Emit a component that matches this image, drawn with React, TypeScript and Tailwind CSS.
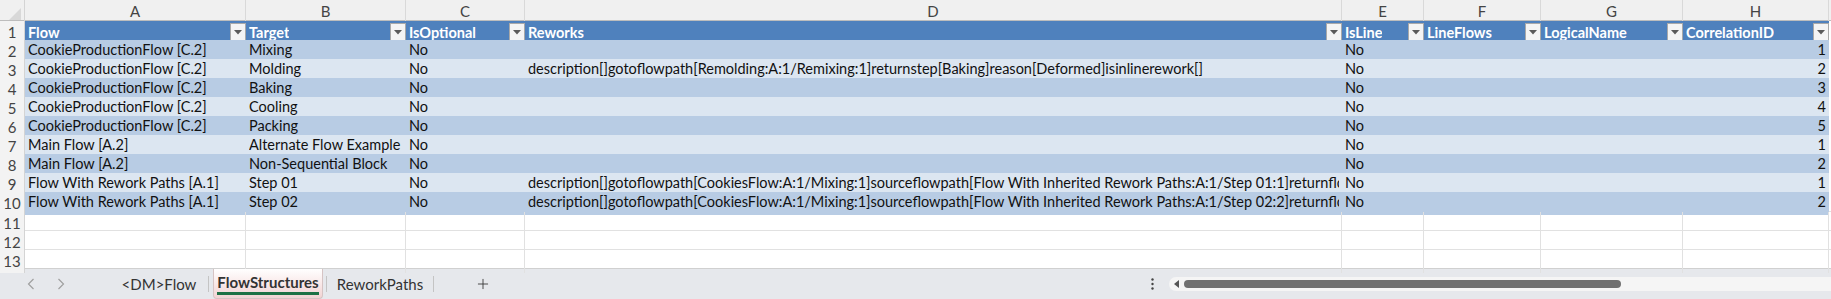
import { Plus } from "lucide-react";

const COLS = "grid grid-cols-[25px_221px_160px_119px_817px_82px_117px_142px_146px_2px]";
const FONT = "font-['Lato',_'Liberation_Sans',_sans-serif]";

type Row = {
  flow: string;
  target: string;
  optional: string;
  reworks: string;
  isLine: string;
  id: number;
};

const rows: Row[] = [
  { flow: "CookieProductionFlow [C.2]", target: "Mixing", optional: "No", reworks: "", isLine: "No", id: 1 },
  {
    flow: "CookieProductionFlow [C.2]",
    target: "Molding",
    optional: "No",
    reworks:
      "description[]gotoflowpath[Remolding:A:1/Remixing:1]returnstep[Baking]reason[Deformed]isinlinerework[]",
    isLine: "No",
    id: 2,
  },
  { flow: "CookieProductionFlow [C.2]", target: "Baking", optional: "No", reworks: "", isLine: "No", id: 3 },
  { flow: "CookieProductionFlow [C.2]", target: "Cooling", optional: "No", reworks: "", isLine: "No", id: 4 },
  { flow: "CookieProductionFlow [C.2]", target: "Packing", optional: "No", reworks: "", isLine: "No", id: 5 },
  { flow: "Main Flow [A.2]", target: "Alternate Flow Example", optional: "No", reworks: "", isLine: "No", id: 1 },
  { flow: "Main Flow [A.2]", target: "Non-Sequential Block", optional: "No", reworks: "", isLine: "No", id: 2 },
  {
    flow: "Flow With Rework Paths [A.1]",
    target: "Step 01",
    optional: "No",
    reworks:
      "description[]gotoflowpath[CookiesFlow:A:1/Mixing:1]sourceflowpath[Flow With Inherited Rework Paths:A:1/Step 01:1]returnflowpath[]",
    isLine: "No",
    id: 1,
  },
  {
    flow: "Flow With Rework Paths [A.1]",
    target: "Step 02",
    optional: "No",
    reworks:
      "description[]gotoflowpath[CookiesFlow:A:1/Mixing:1]sourceflowpath[Flow With Inherited Rework Paths:A:1/Step 02:2]returnflowpath[]",
    isLine: "No",
    id: 2,
  },
];

const headers = ["Flow", "Target", "IsOptional", "Reworks", "IsLine", "LineFlows", "LogicalName", "CorrelationID"];
const letters = ["A", "B", "C", "D", "E", "F", "G", "H"];

function FilterButton() {
  return (
    <span className="flex h-[18px] w-[16px] shrink-0 items-center justify-center border border-[#a9a9a9] bg-[#f4f4f4]">
      <svg width="8" height="5" viewBox="0 0 8 5">
        <path d="M0 0h8L4 4.5z" fill="#5a5a5a" />
      </svg>
    </span>
  );
}

function RowNum({ n }: { n: number }) {
  return (
    <div className="flex items-center justify-center border-r border-[#d4d4d4] bg-[#f3f3f3] text-[15px] text-[#444]">
      {n}
    </div>
  );
}

function Cell({ children, right }: { children?: React.ReactNode; right?: boolean }) {
  return (
    <div className="min-w-0 px-[3px]">
      <div className={`overflow-hidden whitespace-nowrap leading-[19px] ${right ? "text-right" : ""}`}>
        {children}
      </div>
    </div>
  );
}

export default function App() {
  return (
    <div className={`h-[299px] w-[1831px] overflow-hidden bg-white text-[14.5px] text-[#111] ${FONT}`}>
      {/* Column letters */}
      <div className={`${COLS} h-[21px] border-b border-[#bdbdbd] bg-[#f0f0f0] text-[15px] text-[#444]`}>
        <div className="relative border-r border-[#d4d4d4]">
          <svg className="absolute bottom-[3px] right-[3px]" width="12" height="12" viewBox="0 0 12 12">
            <path d="M12 0v12H0z" fill="#d8d8d8" />
          </svg>
        </div>
        {letters.map((l) => (
          <div key={l} className="flex items-center justify-center border-r border-[#d9d9d9]">
            {l}
          </div>
        ))}
        <div />
      </div>

      {/* Table header row */}
      <div className={`${COLS} h-[19px]`}>
        <RowNum n={1} />
        {headers.map((h) => (
          <div key={h} className="flex min-w-0 items-center justify-between bg-[#4f81bd] pl-[3px] font-bold text-white">
            <span className="overflow-hidden whitespace-nowrap leading-[19px]">{h}</span>
            <FilterButton />
          </div>
        ))}
        <div />
      </div>

      {/* Data rows */}
      {rows.map((r, i) => (
        <div key={i} className={`${COLS} h-[19px]`}>
          <RowNum n={i + 2} />
          <div className={`col-span-8 grid grid-cols-subgrid ${i % 2 === 0 ? "bg-[#b8cce4]" : "bg-[#dce6f1]"}`}>
            <Cell>{r.flow}</Cell>
            <Cell>{r.target}</Cell>
            <Cell>{r.optional}</Cell>
            <Cell>{r.reworks}</Cell>
            <Cell>{r.isLine}</Cell>
            <Cell />
            <Cell />
            <Cell right>{r.id}</Cell>
          </div>
          <div />
        </div>
      ))}

      {/* Empty rows */}
      {[11, 12, 13].map((n) => (
        <div key={n} className={`${COLS} h-[19px] border-t border-[#e1e1e1]`}>
          <RowNum n={n} />
          {letters.map((l) => (
            <div key={l} className="border-r border-[#e1e1e1]" />
          ))}
          <div />
        </div>
      ))}

      {/* Sheet tabs */}
      <div className="flex h-[31px] items-stretch border-t border-[#d0d0d0] bg-[#e6e8ec] text-[15px] text-[#333]">
        <div className="flex w-[110px] items-center gap-[22px] pl-[27px] text-[#a0a0a0]">
          <svg width="8" height="12" viewBox="0 0 8 12">
            <path d="M6.5 1L1.5 6l5 5" fill="none" stroke="currentColor" strokeWidth="1.2" />
          </svg>
          <svg width="8" height="12" viewBox="0 0 8 12">
            <path d="M1.5 1l5 5-5 5" fill="none" stroke="currentColor" strokeWidth="1.2" />
          </svg>
        </div>
        <div className="flex w-[98px] items-center justify-center">&lt;DM&gt;Flow</div>
        <div className="my-[7px] w-px bg-[#c4c4c4]" />
        <div className="ml-[4px] flex w-[110px] items-center justify-center rounded-b-[4px] border border-t-0 border-[#d6c4c4] bg-gradient-to-b from-white to-[#f2d3d3] font-bold">
          <span className="border-b-[3px] border-[#1e7145] leading-[20px]">FlowStructures</span>
        </div>
        <div className="ml-[3px] my-[7px] w-px bg-[#c4c4c4]" />
        <div className="flex w-[106px] items-center justify-center">ReworkPaths</div>
        <div className="my-[7px] w-px bg-[#c4c4c4]" />
        <div className="flex w-[98px] items-center justify-center text-[#333]">
          <Plus size={16} strokeWidth={1.3} />
        </div>
        <div className="flex-1" />
        <div className="flex w-[34px] items-center justify-center text-[#444]">
          <svg width="3" height="12" viewBox="0 0 3 12">
            <circle cx="1.5" cy="1.5" r="1.2" fill="currentColor" />
            <circle cx="1.5" cy="6" r="1.2" fill="currentColor" />
            <circle cx="1.5" cy="10.5" r="1.2" fill="currentColor" />
          </svg>
        </div>
        <div className="my-[8px] flex w-[662px] items-center gap-[4px] rounded-l-full bg-[#f5f5f5] pl-[5px]">
          <svg width="6" height="8" viewBox="0 0 6 8">
            <path d="M5 0v8L0 4z" fill="#555" />
          </svg>
          <div className="h-[8px] w-[437px] rounded-full bg-[#707070]" />
        </div>
      </div>
    </div>
  );
}
